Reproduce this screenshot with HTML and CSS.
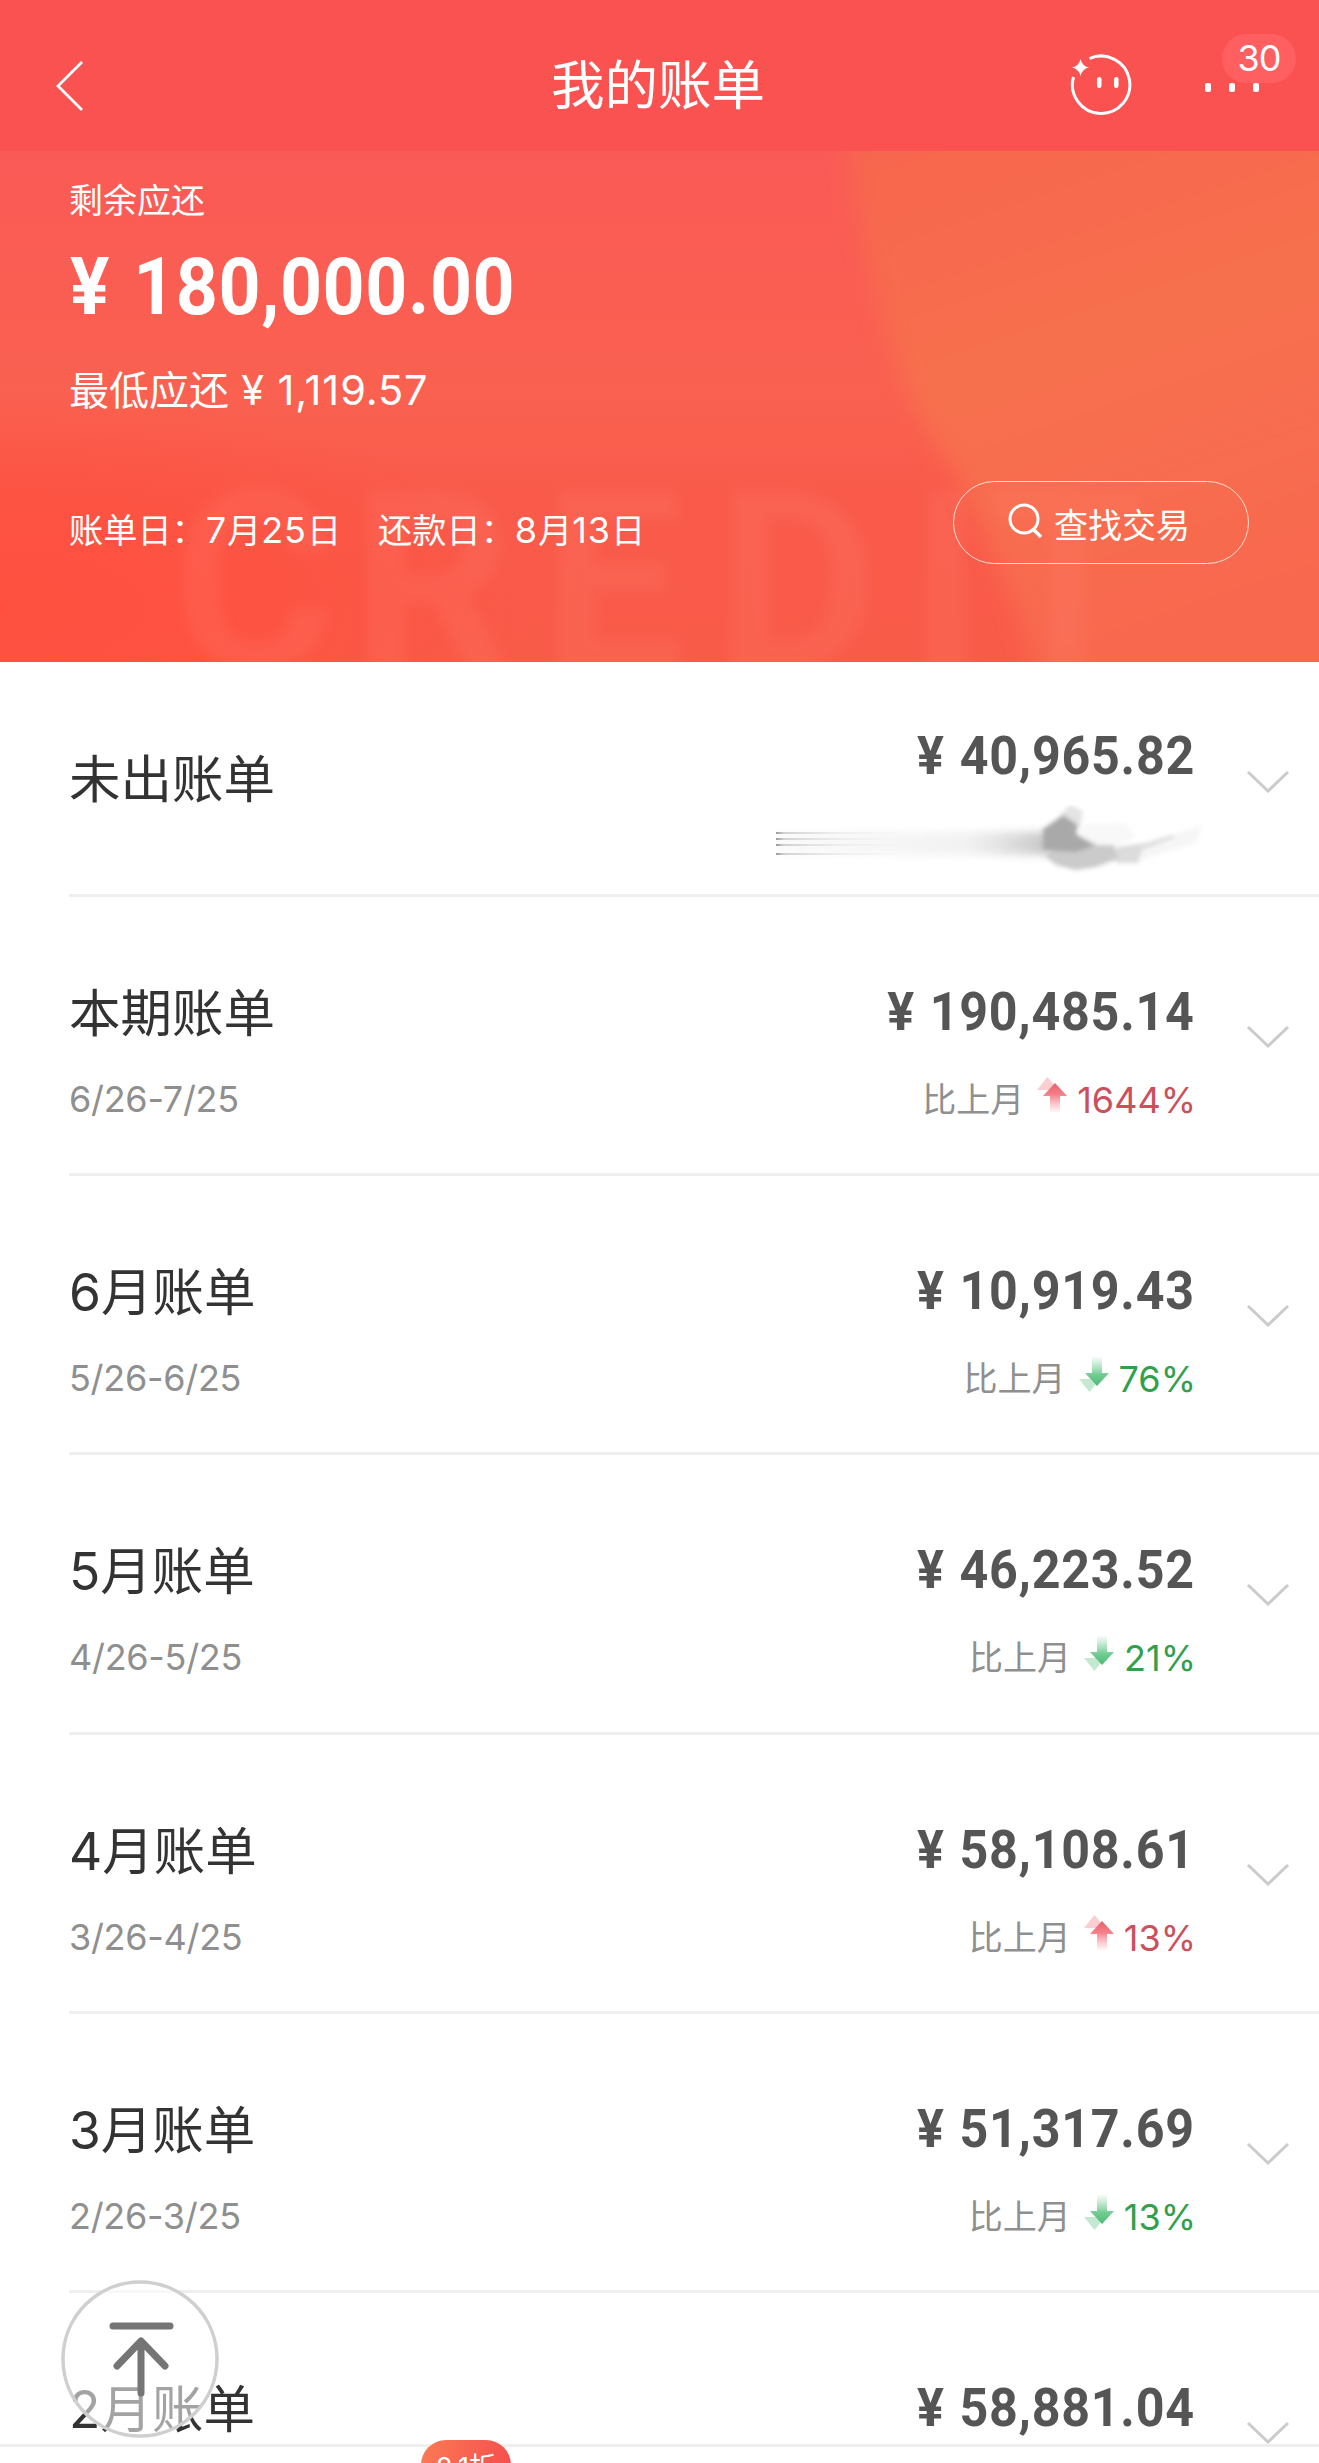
FILE: index.html
```
<!DOCTYPE html>
<html lang="zh-CN">
<head>
    <meta charset="UTF-8">
    <meta name="viewport" content="width=device-width, initial-scale=1.0">
    <title>我的账单</title>
    <link rel="stylesheet" href="styles.css">
</head>
<body>
    <!-- Shared icons -->
    <svg class="defs" width="0" height="0">
        <defs>
            <linearGradient id="fade-up" x1="0" y1="0" x2="0" y2="1">
                <stop offset="0" stop-color="#e8606a"/>
                <stop offset="0.4" stop-color="#f4808a"/>
                <stop offset="1" stop-color="#f9a0a8" stop-opacity="0.1"/>
            </linearGradient>
            <linearGradient id="fade-down" x1="0" y1="1" x2="0" y2="0">
                <stop offset="0" stop-color="#4cba74"/>
                <stop offset="0.4" stop-color="#74cd94"/>
                <stop offset="1" stop-color="#9adcb0" stop-opacity="0.1"/>
            </linearGradient>
            <symbol id="icon-up" viewBox="0 0 30 36">
                <path d="M0 13L10.500 0L21 13Z" fill="#f9b9be" opacity="0.7"/>
                <path d="M18 6L30 19H23V35H13V19H6Z" fill="url(#fade-up)"/>
            </symbol>
            <symbol id="icon-down" viewBox="0 0 30 36">
                <path d="M0 23L10.500 36L21 23Z" fill="#b5e4c4" opacity="0.8"/>
                <path d="M18 30L30 17H23V1H13V17H6Z" fill="url(#fade-down)"/>
            </symbol>
            <symbol id="icon-chevron" viewBox="0 0 44 24">
                <path d="M2 2L22 21L42 2" fill="none" stroke="#cbcbcb" stroke-width="3"/>
            </symbol>
        </defs>
    </svg>

    <header class="navbar">
        <svg class="back" width="28" height="50" viewBox="0 0 28 50">
            <path d="M26 1L2 25L26 49" fill="none" stroke="#fff" stroke-width="2.800"/>
        </svg>
        <h1>我的账单</h1>
        <div class="actions">
            <svg class="face" width="66" height="66" viewBox="0 0 66 66">
                <path d="M21.500 5.500A28.700 28.700 0 1 1 5.500 24" fill="none" stroke="#fff" stroke-width="3"/>
                <path d="M12.500 6Q14 13 21 14.500Q14 16 12.500 23Q11 16 4 14.500Q11 13 12.500 6Z" fill="#fff"/>
                <rect x="29" y="24" width="4.500" height="11" rx="2.200" fill="#fff"/>
                <rect x="46" y="24" width="4.500" height="11" rx="2.200" fill="#fff"/>
            </svg>
            <div class="more">
                <span class="badge">30</span>
                <i></i><i></i><i></i>
            </div>
        </div>
    </header>

    <section class="summary">
        <svg class="backdrop" width="1319" height="511" viewBox="0 0 1319 511">
            <defs>
                <linearGradient id="base" x1="0" y1="0" x2="0" y2="1">
                    <stop offset="0" stop-color="#fa5a56"/>
                    <stop offset="0.480" stop-color="#fa6150"/>
                    <stop offset="0.680" stop-color="#f95a4a"/>
                    <stop offset="1" stop-color="#f95b49"/>
                </linearGradient>
                <radialGradient id="glow" cx="0" cy="0.850" r="0.600">
                    <stop offset="0" stop-color="#ff4f3f"/>
                    <stop offset="0.400" stop-color="#ff5040" stop-opacity="0.800"/>
                    <stop offset="1" stop-color="#ff5040" stop-opacity="0"/>
                </radialGradient>
                <linearGradient id="orange" x1="0" y1="0" x2="0.300" y2="1">
                    <stop offset="0" stop-color="#f7644f"/>
                    <stop offset="0.500" stop-color="#f7704d"/>
                    <stop offset="1" stop-color="#f86a50" stop-opacity="0.900"/>
                </linearGradient>
                <filter id="soft" x="-10%" y="-10%" width="120%" height="120%">
                    <feGaussianBlur stdDeviation="11"/>
                </filter>
                <filter id="soft-text">
                    <feGaussianBlur stdDeviation="6"/>
                </filter>
            </defs>
            <rect width="1319" height="511" fill="url(#base)"/>
            <rect y="150" width="900" height="361" fill="url(#glow)"/>
            <path d="M840 -30C865 110 890 240 955 320C990 400 1020 460 1040 540H1350V-30Z" fill="url(#orange)" filter="url(#soft)"/>
            <text class="watermark" x="172 352 542 716 910 990" y="518" filter="url(#soft-text)">CREDIT</text>
        </svg>
        <div class="label">剩余应还</div>
        <div class="total"><span class="yen">¥</span>180,000.00</div>
        <div class="minimum">最低应还 <span class="num">¥ 1,119.57</span></div>
        <div class="footer">
            <div class="dates">
                <span>账单日：<b>7</b>月<b>25</b>日</span>
                <span>还款日：<b>8</b>月<b>13</b>日</span>
            </div>
            <button class="search">
                <svg width="36" height="40" viewBox="0 0 36 40">
                    <circle cx="16" cy="16" r="14" fill="none" stroke="#fff" stroke-width="3"/>
                    <path d="M25 26L33 34" stroke="#fff" stroke-width="3.500"/>
                </svg>
                查找交易
            </button>
        </div>
    </section>

    <main class="bills">
        <div class="bill pending">
            <div class="info"><h2>未出账单</h2></div>
            <div class="figures">
                <div class="amount"><span class="yen">¥</span>40,965.82</div>
                <svg class="smudge" width="430" height="70" viewBox="0 0 430 70">
                    <defs>
                        <linearGradient id="streak">
                            <stop offset="0" stop-color="#999"/>
                            <stop offset="0.030" stop-color="#d2d2d2"/>
                            <stop offset="0.250" stop-color="#e4e4e4" stop-opacity="0.500"/>
                            <stop offset="0.500" stop-color="#eee" stop-opacity="0"/>
                        </linearGradient>
                        <linearGradient id="haze">
                            <stop offset="0" stop-color="#eee" stop-opacity="0.300"/>
                            <stop offset="0.700" stop-color="#e4e4e4" stop-opacity="0.500"/>
                            <stop offset="1" stop-color="#c4c4c4"/>
                        </linearGradient>
                        <filter id="blur1"><feGaussianBlur stdDeviation="2.200"/></filter>
                        <filter id="blur3" x="-10%" y="-50%" width="120%" height="200%"><feGaussianBlur stdDeviation="4"/></filter>
                    </defs>
                    <rect x="0" y="27" width="274" height="23" fill="url(#haze)" filter="url(#blur3)"/>
                    <path fill="url(#streak)" d="M0 27H270V29H0ZM0 33H270V35H0ZM0 39H270V41H0ZM0 48H270V50H0Z"/>
                    <g filter="url(#blur1)">
                        <path d="M284 10L294 0L307 6L304 22Z" fill="#e4e4e4"/>
                        <path d="M300 20L350 18L360 32L330 44L308 36Z" fill="#f8f8f8"/>
                        <path d="M360 44L408 26L426 20L420 38L362 56Z" fill="#f6f6f6"/>
                        <path d="M340 42L370 38L396 30L400 32L366 45L362 58H340Z" fill="#dcdcdc"/>
                        <path d="M268 50L302 30L322 40L338 40L342 54L320 62L300 65L280 60Z" fill="#cbcbcb"/>
                        <path d="M267 24L287 10L302 20L300 29L318 41L300 47L267 45Z" fill="#a9a9a9"/>
                    </g>
                </svg>
            </div>
            <svg class="chevron"><use href="#icon-chevron"/></svg>
        </div>

        <div class="bill">
            <div class="info"><h2>本期账单</h2><p>6/26-7/25</p></div>
            <div class="figures">
                <div class="amount"><span class="yen">¥</span>190,485.14</div>
                <div class="change up">比上月<svg><use href="#icon-up"/></svg><span>1644%</span></div>
            </div>
            <svg class="chevron"><use href="#icon-chevron"/></svg>
        </div>

        <div class="bill">
            <div class="info"><h2><b>6</b>月账单</h2><p>5/26-6/25</p></div>
            <div class="figures">
                <div class="amount"><span class="yen">¥</span>10,919.43</div>
                <div class="change down">比上月<svg><use href="#icon-down"/></svg><span>76%</span></div>
            </div>
            <svg class="chevron"><use href="#icon-chevron"/></svg>
        </div>

        <div class="bill">
            <div class="info"><h2><b>5</b>月账单</h2><p>4/26-5/25</p></div>
            <div class="figures">
                <div class="amount"><span class="yen">¥</span>46,223.52</div>
                <div class="change down">比上月<svg><use href="#icon-down"/></svg><span>21%</span></div>
            </div>
            <svg class="chevron"><use href="#icon-chevron"/></svg>
        </div>

        <div class="bill">
            <div class="info"><h2><b>4</b>月账单</h2><p>3/26-4/25</p></div>
            <div class="figures">
                <div class="amount"><span class="yen">¥</span>58,108.61</div>
                <div class="change up">比上月<svg><use href="#icon-up"/></svg><span>13%</span></div>
            </div>
            <svg class="chevron"><use href="#icon-chevron"/></svg>
        </div>

        <div class="bill">
            <div class="info"><h2><b>3</b>月账单</h2><p>2/26-3/25</p></div>
            <div class="figures">
                <div class="amount"><span class="yen">¥</span>51,317.69</div>
                <div class="change down">比上月<svg><use href="#icon-down"/></svg><span>13%</span></div>
            </div>
            <svg class="chevron"><use href="#icon-chevron"/></svg>
        </div>

        <div class="bill">
            <div class="info"><h2><b>2</b>月账单</h2></div>
            <div class="figures">
                <div class="amount"><span class="yen">¥</span>58,881.04</div>
            </div>
            <svg class="chevron"><use href="#icon-chevron"/></svg>
        </div>
    </main>

    <!-- Back to top -->
    <a class="to-top" href="#">
        <svg width="160" height="160" viewBox="0 0 160 160">
            <circle cx="80" cy="80" r="77" fill="#fff" fill-opacity="0.550" stroke="#cfcfcf" stroke-width="3.500"/>
            <g fill="none" stroke="#757575" stroke-width="7" stroke-linecap="round">
                <path d="M53 47H110"/>
                <path d="M81 62V114M57 87L81 62L105 87" stroke-linejoin="round"/>
            </g>
        </svg>
    </a>

    <footer class="tabbar">
        <span class="promo">2.1折</span>
    </footer>
</body>
</html>
```
FILE: styles.css
```
* {
    margin: 0;
    padding: 0;
    box-sizing: border-box;
}

body {
    position: relative;
    width: 1319px;
    height: 2463px;
    overflow: hidden;
    background-color: #fff;
    font-family: "Inter", "Noto Sans CJK SC", sans-serif;
    color: #333;
}

b {
    font-weight: 400;
}

.defs {
    position: absolute;
}

/* Navbar */
.navbar {
    height: 151px;
    padding: 21px 60px 0 56px;
    display: grid;
    grid-template-columns: 1fr auto 1fr;
    align-items: center;
    background-color: #f95250;
    color: #fff;
}

.navbar h1 {
    padding-left: 1px;
    font-size: 53.5px;
    line-height: 60px;
    font-weight: 400;
}

.actions {
    display: flex;
    justify-content: flex-end;
    align-items: center;
    gap: 71px;
}

.more {
    position: relative;
    display: flex;
    gap: 18px;
    padding-top: 2px;
}

.more i {
    width: 6px;
    height: 9px;
    border-radius: 2px;
    background-color: #fff;
}

.badge {
    position: absolute;
    left: 17px;
    top: -47px;
    width: 74px;
    height: 49px;
    border-radius: 25px;
    background-color: #ff5f60;
    font-size: 36px;
    line-height: 49px;
    letter-spacing: -1px;
    text-align: center;
}

/* Summary */
.summary {
    position: relative;
    height: 511px;
    padding: 25px 70px 0 69px;
    overflow: hidden;
    color: #fff;
}

.backdrop {
    position: absolute;
    left: 0;
    top: 0;
    z-index: -1;
}

.watermark {
    font-family: "Roboto", sans-serif;
    font-size: 250px;
    font-weight: 700;
    fill: #ff8070;
    fill-opacity: 0.2;
}

.label {
    font-size: 34px;
    line-height: 50px;
}

.total {
    margin-top: 15px;
    font-family: "Roboto", sans-serif;
    font-size: 79px;
    line-height: 92px;
    font-weight: 700;
    letter-spacing: 0.6px;
    transform: scaleX(0.93);
    transform-origin: left;
}

.total .yen {
    margin-left: 1px;
    margin-right: 25px;
}

.minimum {
    margin-top: 32px;
    font-size: 40px;
    line-height: 50px;
}

.minimum .num {
    margin-left: 1px;
    font-size: 41.5px;
    letter-spacing: 0.9px;
}

.footer {
    margin-top: 65px;
    display: flex;
    justify-content: space-between;
    align-items: center;
}

.dates {
    display: flex;
    gap: 37px;
    padding-top: 16px;
    font-size: 34.2px;
    line-height: 50px;
}

.dates b {
    font-size: 36px;
    letter-spacing: 0.9px;
}

.search {
    width: 296px;
    height: 83px;
    border: 1.5px solid #ffe0d0;
    border-radius: 42px;
    background: none;
    display: flex;
    justify-content: center;
    align-items: center;
    gap: 10px;
    padding: 1px 4px 0 0;
    color: #fff;
    font-family: inherit;
    font-size: 34px;
}

/* Bill list */
.bill {
    height: 279.2px;
    margin-left: 69px;
    padding: 80px 29px 0 0;
    border-bottom: 3px solid #efefef;
    display: flex;
}

.bill.pending {
    height: 235px;
}

.info {
    flex: 1;
}

.info h2 {
    font-size: 51.5px;
    line-height: 72px;
    font-weight: 400;
}

.info p {
    margin-top: 25px;
    font-size: 36px;
    line-height: 50px;
    letter-spacing: -0.3px;
    color: #8f8f8f;
}

.pending .info h2 {
    margin-top: 1px;
}

.figures {
    text-align: right;
}

.amount {
    font-family: "Roboto", sans-serif;
    font-size: 54px;
    line-height: 70px;
    font-weight: 700;
    letter-spacing: 0.8px;
    color: #555;
    transform: scaleX(0.93);
    transform-origin: right;
}

.amount .yen {
    margin-right: 16px;
}

.pending .figures {
    margin-top: -21px;
}

.change {
    margin-top: 28px;
    display: flex;
    justify-content: flex-end;
    align-items: center;
    font-size: 34px;
    line-height: 50px;
    color: #8f8f8f;
}

.change svg {
    width: 30px;
    height: 36px;
    margin: 0 10px 10px 13px;
}

.change span {
    margin-right: -1px;
    font-size: 36px;
}

.up span {
    color: #cc4f5c;
}

.down span {
    color: #30a04c;
}

.chevron {
    width: 44px;
    height: 24px;
    margin: 48px 0 0 51px;
}

.pending .chevron {
    margin-top: 28px;
}

.smudge {
    display: block;
    margin: 14px -11px 0 0;
}

/* Floating controls */
.to-top {
    position: absolute;
    left: 60px;
    top: 2279px;
}

.tabbar {
    position: absolute;
    left: 0;
    bottom: 0;
    width: 100%;
    height: 19px;
    border-top: 3px solid #efefef;
    background-color: #fff;
}

.promo {
    position: absolute;
    left: 421px;
    top: -7px;
    width: 90px;
    height: 50px;
    border-radius: 25px;
    background: linear-gradient(100deg, #fb7a55, #f54d4d);
    color: #fff;
    font-size: 27px;
    line-height: 56px;
    text-align: center;
}
```
